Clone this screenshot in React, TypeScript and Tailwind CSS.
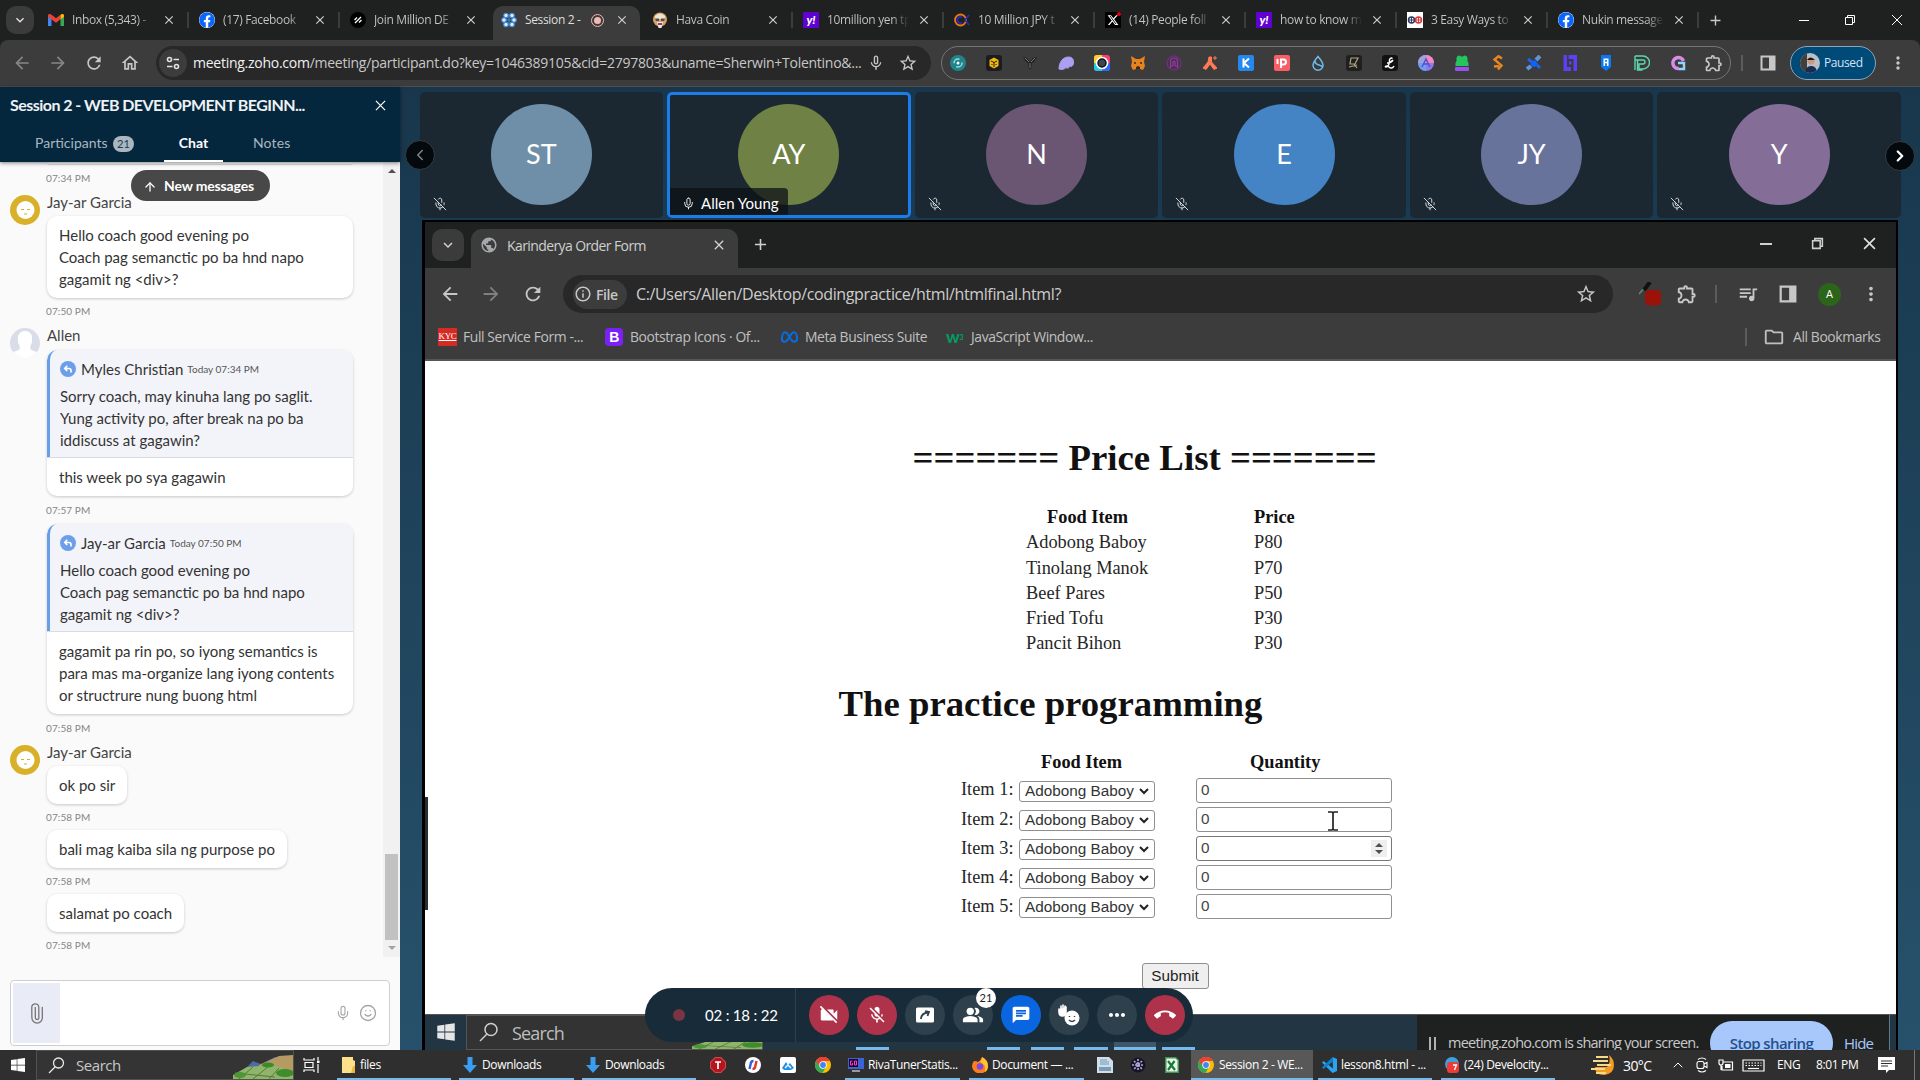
import type { ReactNode } from "react";
import {
  MdArrowBack, MdArrowForward, MdRefresh, MdOutlineHome, MdStarBorder, MdOutlineExtension, MdMicNone,
  MdMoreVert, MdOutlineQueueMusic, MdOutlineFolder, MdInfoOutline, MdClose, MdAdd, MdExpandMore,
  MdVideocamOff, MdMicOff, MdPeopleAlt, MdChat, MdMoreHoriz, MdCallEnd, MdPublic,
} from "react-icons/md";
import { FaFacebook, FaWindows } from "react-icons/fa";
import { FaXTwitter } from "react-icons/fa6";
import { Paperclip, Mic, MicOff, Smile, ArrowUp, ChevronLeft, ChevronRight, ChevronUp } from "lucide-react";

/* ---------- shared glyphs ---------- */

function Chrome({ className }: { className: string }) {
  return (
    <svg viewBox="0 0 24 24" className={className}>
      <circle cx="12" cy="12" r="12" fill="#fbbc05" />
      <path d="M12 12 1.6 6A12 12 0 0 1 22.4 6H12Z" fill="#ea4335" />
      <path d="M12 12 1.6 6a12 12 0 0 0 9.6 18l5.5-9.5Z" fill="#34a853" />
      <path d="M1.6 6A12 12 0 0 1 22.4 6H12l-5 7.500Z" fill="#ea4335" />
      <circle cx="12" cy="12" r="5.6" fill="#fff" />
      <circle cx="12" cy="12" r="4.400" fill="#4285f4" />
    </svg>
  );
}

function Restore({ className }: { className: string }) {
  return (
    <svg viewBox="0 0 12 12" className={className} fill="none" stroke="currentColor">
      <path d="M1.500 3.500h7v7h-7zM3.500 3.500v-2h7v7h-2" />
    </svg>
  );
}

function SidePanel({ className }: { className: string }) {
  return (
    <svg viewBox="0 0 16 16" className={className} fill="none" stroke="currentColor" strokeWidth="2">
      <path d="M1.500 1.500h13v13h-13z" />
      <path d="M9 1h6v14H9z" fill="currentColor" stroke="none" />
    </svg>
  );
}

function Yahoo() {
  return (
    <span className="flex h-4 w-4 items-center justify-center bg-[#5f01d1] font-['Lato'] text-[12px] leading-none font-black text-white italic">
      y!
    </span>
  );
}

/* ---------- outer browser ---------- */

const tabs: { title: string; icon: ReactNode; active?: boolean; sep?: boolean }[] = [
  {
    title: "Inbox (5,343) -", sep: true,
    icon: (
      <svg viewBox="0 0 16 12" className="h-3 w-4">
        <path d="M0 1.500V12h3.500V5Z" fill="#4285f4" />
        <path d="M16 1.500V12h-3.500V5Z" fill="#34a853" />
        <path d="M0 1.500C0 0 2 -.5 3.500.7L8 4.200 12.500.7v4.600L8 8.800 0 2.800Z" fill="#ea4335" />
        <path d="M12.500.7C14-.5 16 0 16 1.500v1.300l-3.500 2.600Z" fill="#fbbc04" />
      </svg>
    ),
  },
  { title: "(17) Facebook", sep: true, icon: <FaFacebook className="h-4 w-4 rounded-full bg-white text-[#0866ff]" /> },
  {
    title: "Join Million DE",
    icon: (
      <svg viewBox="0 0 16 16" className="h-4 w-4">
        <circle cx="8" cy="8" r="8" fill="#000" />
        <path d="m5 11 6-6M4.500 8 7 5.500M9 10.500 11.500 8" stroke="#fff" strokeWidth="1.300" />
      </svg>
    ),
  },
  {
    title: "Session 2 -", active: true,
    icon: (
      <svg viewBox="0 0 16 16" className="h-4 w-4" fill="#d8ecff" stroke="#3f86d0" strokeWidth="1.100">
        <circle cx="5" cy="3.500" r="2.300" /><circle cx="11" cy="3.500" r="2.300" />
        <circle cx="3" cy="8" r="2.300" /><circle cx="13" cy="8" r="2.300" />
        <circle cx="5" cy="12.500" r="2.300" /><circle cx="11" cy="12.500" r="2.300" />
        <path d="M8 2v12M5 8h6" />
      </svg>
    ),
  },
  {
    title: "Hava Coin", sep: true,
    icon: (
      <svg viewBox="0 0 16 16" className="h-4 w-4">
        <circle cx="8" cy="7.500" r="7" fill="#d9a066" />
        <path d="M3 4q5-5 10 0v3H3Z" fill="#f2e3cf" />
        <path d="M3 6.500h4V9H4zM9 6.500h4L12 9H9z" fill="#43506b" />
        <path d="M5 10h6l-1.500 6h-3Z" fill="#e9e4e6" />
        <path d="M6 11h4v2H6z" fill="#a33b4b" />
      </svg>
    ),
  },
  { title: "10million yen tp", sep: true, icon: <Yahoo /> },
  {
    title: "10 Million JPY t", sep: true,
    icon: (
      <svg viewBox="0 0 16 16" className="h-4 w-4" fill="none" strokeWidth="1.800">
        <circle cx="6.500" cy="8" r="5.500" stroke="#e8771f" />
        <path d="M8 5.500a3 3 0 1 0 0 5M11 8l4-5M11 8l4 5" stroke="#2a2bb5" />
      </svg>
    ),
  },
  {
    title: "(14) People foll", sep: true,
    icon: (
      <span className="relative flex h-4 w-4 items-center justify-center bg-black text-white">
        <FaXTwitter className="h-3 w-3" />
        <i className="absolute top-0 right-0 h-1 w-1 rounded-full bg-red-600" />
      </span>
    ),
  },
  { title: "how to know m", sep: true, icon: <Yahoo /> },
  {
    title: "3 Easy Ways to", sep: true,
    icon: (
      <svg viewBox="0 0 16 16" className="h-4 w-4">
        <path d="M0 0h16v16H0z" fill="#fff" />
        <circle cx="4.500" cy="8" r="3" fill="none" stroke="#2a3c63" strokeWidth="1.500" />
        <circle cx="11.500" cy="8" r="3" fill="none" stroke="#d8393b" strokeWidth="1.500" />
        <path d="M2 8h5M4.500 5v6" stroke="#2a3c63" />
        <path d="M9 8h5M11.500 5v6" stroke="#d8393b" />
      </svg>
    ),
  },
  { title: "Nukin message", sep: true, icon: <FaFacebook className="h-4 w-4 rounded-full bg-white text-[#0866ff]" /> },
];

function TabStrip() {
  return (
    <div className="flex h-10 items-stretch bg-[#1f2120] pl-1.5">
      <button className="mt-1.5 flex h-7 w-7 items-center justify-center rounded-[10px] bg-[#3b3b3b] text-[#e3e3e3]">
        <MdExpandMore className="h-4 w-4" />
      </button>
      <div className="ml-1 flex">
        {tabs.map((t) => (
          <div
            key={t.title}
            className={
              t.active
                ? "relative flex w-[151px] items-center pl-[10px] before:absolute before:inset-x-[2px] before:top-1.5 before:bottom-0 before:rounded-t-[10px] before:bg-[#3c3c3c]"
                : "relative flex w-[151px] items-center pl-[10px]"
            }
          >
            <span className="relative flex w-4 items-center">{t.icon}</span>
            <span
              className={
                t.active
                  ? "relative ml-2 w-[66px] overflow-hidden text-[12px] tracking-[-0.35px] whitespace-nowrap text-[#dfdfdf]"
                  : "relative ml-2 w-[82px] overflow-hidden bg-linear-to-r from-[#c7c7c7] from-80% to-[#1f2120] bg-clip-text text-[12px] tracking-[-0.35px] whitespace-nowrap text-transparent"
              }
            >
              {t.title}
            </span>
            {t.active && (
              <span className="relative mr-[3px] flex h-[13px] w-[13px] items-center justify-center rounded-full border border-[#f2b8b5]">
                <i className="h-[7px] w-[7px] rounded-full bg-[#f2b8b5]" />
              </span>
            )}
            <MdClose className="relative ml-2 h-3.5 w-3.5 text-[#d0d0d0]" />
            {t.sep && <i className="absolute top-3 right-0 h-4 w-0.5 bg-[#3c3c3c]" />}
          </div>
        ))}
      </div>
      <div className="flex w-8 items-center justify-center text-[#c7c7c7]"><MdAdd className="h-[17px] w-[17px]" /></div>
      <div className="ml-auto flex w-[138px] items-center justify-around text-white">
        <i className="h-px w-2.5 bg-white" />
        <Restore className="h-3 w-3" />
        <svg viewBox="0 0 12 12" className="h-3 w-3" stroke="currentColor"><path d="m1 1 10 10M11 1 1 11" /></svg>
      </div>
    </div>
  );
}

const extensions: ReactNode[] = [
  <><circle cx="8" cy="8" r="8" fill="#23838b" /><circle cx="8" cy="8" r="4" fill="none" stroke="#8de0e0" strokeWidth="1.500" strokeDasharray="8 4" /><circle cx="8" cy="8" r="1.500" fill="#fff" /></>,
  <><rect width="16" height="16" rx="3" fill="#1c1c20" /><path d="M8 2.500 12.500 5v6L8 13.500 3.500 11V5Z" fill="#f0b90b" /><path d="m5 6 3 1.500L11 6M8 7.500V12M6 9v1M10 9v1" stroke="#1c1c20" fill="none" /></>,
  <><path d="m1 2 4 1 3 4 3-4 4-1-3 5-2 1-1 6H7L6 8 4 7Z" fill="#222" /><path d="m3 3 4 4M13 3 9 7M8 8v5" stroke="#777" /></>,
  <path d="M1 14C1 7 5 2 10.500 2 14.500 2 16 5 15.500 8c-.4 3-2 4-3.500 3-1 2-3 3-4 1.500C6.500 14.500 3 15 1 14ZM10 5v2M13 5v2" fill="#ab9ff2" stroke="#ab9ff2" />,
  <><rect width="16" height="16" rx="3" fill="#ff3e70" /><path d="M0 8V3a3 3 0 0 1 3-3h5v8Z" fill="#ffce2b" /><path d="M8 16h5a3 3 0 0 0 3-3V8H8Z" fill="#2a6cff" /><path d="M0 8v5a3 3 0 0 0 3 3h5V8Z" fill="#21c8e8" /><circle cx="8" cy="8" r="6.300" fill="#fff" /><circle cx="8" cy="8" r="4" fill="#3c4752" stroke="#111" strokeWidth="1.500" /></>,
  <><path d="m1 1 5 3h4l5-3-1 6 1 4-2 4-3-1H6l-3 1-2-4 1-4Z" fill="#e8821e" /><path d="m6 12 2-1 2 1v2H6Z" fill="#3b2a1e" /><path d="M4 8h2M10 8h2" stroke="#3b2a1e" strokeWidth="1.500" /></>,
  <><circle cx="8" cy="8" r="7" fill="none" stroke="#7a2a8c" strokeWidth="1.200" /><path d="M4.500 13V6.500a3.500 3.500 0 0 1 7 0V13M7 11V7a1 1 0 0 1 2 0v4M4.500 11H7M9 11h2.500" fill="none" stroke="#a32db5" strokeWidth="1.200" /></>,
  <path d="M7 2h2.500v5L15 13l-3 1.500L8 9l-4 5.500L1 13l5-6ZM13 1v4M11 3h4" fill="#ff7b54" stroke="#ff7b54" />,
  <><rect width="16" height="16" rx="2" fill="#2488ee" /><path d="M5.500 3.500v9M11 3.500 6 8l5 4.500" fill="none" stroke="#fff" strokeWidth="2" /></>,
  <><rect width="16" height="16" rx="2" fill="#f95f64" /><path d="M7 13V4.500h2.500a2 2 0 0 1 0 5H7M3.500 4v5" fill="none" stroke="#fff" strokeWidth="2" /></>,
  <path d="M8 1.500C5 5 3 7.500 3 10.200a5 5 0 0 0 10 0C13 7.500 11 5 8 1.500ZM5 6q0 3 4 4t3 3" fill="none" stroke="#6fbcf0" strokeWidth="1.500" />,
  <><rect width="16" height="16" rx="3" fill="#1f1f1f" /><path d="M5 3h7L9 9H4ZM3 12l8-2M8 9l3 4" fill="none" stroke="#b5a67c" strokeWidth="1.200" /></>,
  <><rect width="16" height="16" rx="3" fill="#111" /><path d="M10.500 3.500C9 2 7 4 7.500 6S6 12 4 12s1-2 3 0 4 1 5-1M5 8q4 0 6-3" fill="none" stroke="#fff" strokeWidth="1.500" /></>,
  <><circle cx="8" cy="8" r="8" fill="#8c7bf0" /><path d="M0 8a8 8 0 0 1 16 0Z" fill="#f28ac0" /><path d="M2 3a8 8 0 0 1 6-3v16a8 8 0 0 1-8-8Z" fill="#5ab8f5" opacity=".6" /><path d="m4 12 4-8 4 8M6 9h4" fill="none" stroke="#5b50c8" strokeWidth="1.500" /></>,
  <><path d="M1.500 11V8l1-2V3A2.500 2.500 0 0 1 7 1.500h2A2.500 2.500 0 0 1 13.500 3v3l1 2v3Z" fill="#25c45c" /><rect x="1" y="12" width="14" height="4" rx="1" fill="#9b4ff0" /></>,
  <path d="M12 3.500 8.500 1.200 4.500 4.500 11.500 10.500 8 14.500M4 11.500l5-.5" fill="none" stroke="#e8871e" strokeWidth="2.400" />,
  <><path d="m5 7 4-2 3 4-3 3-4-1Z" fill="#0d63ff" /><path d="m10 5 4-4M1 14l4-3" stroke="#5e95d8" strokeWidth="4" /><path d="m2 4 4 3M11 10l3 3" stroke="#1e63e8" strokeWidth="3" /></>,
  <path d="M1.500 0h3.500v12h4v4H1.500ZM6.500 0H15v16h-3.500V4h-5ZM7 6.500h2.500v3H7z" fill="#5b41f5" />,
  <><path d="M3 0h10v12l-5 4-5-4Z" fill="#0a78f0" /><path d="M6.300 11V4.200h3.400V11M6 7.500h4" fill="none" stroke="#fff" strokeWidth="1.600" /></>,
  <path d="M1 1h8a6.500 6.500 0 0 1 0 13H5V9h4a2 2 0 0 0 0-4H1M1 1v14M3.500 5v10h5" fill="none" stroke="#5cd8ac" strokeWidth="1.400" />,
  <><path d="M13.500 6A5.500 5.500 0 1 0 9 13.500" fill="none" stroke="#d88be8" strokeWidth="3.500" /><path d="M8 8h6v6H9" fill="none" stroke="#8fd3ff" strokeWidth="2.500" /></>,
];

function Toolbar() {
  return (
    <div className="flex h-[47px] items-center rounded-t-lg border-b border-[#4d4d4d] bg-[#3c3c3c] pl-3 text-[#c7c7c7]">
      <MdArrowBack className="h-5 w-5 text-[#868686]" />
      <MdArrowForward className="ml-4 h-5 w-5 text-[#868686]" />
      <MdRefresh className="ml-4 h-5 w-5" />
      <MdOutlineHome className="ml-4 h-5 w-5" />
      <div className="ml-4 flex h-[34px] w-[775px] items-center rounded-full bg-[#282828] pl-[3px]">
        <span className="flex h-7 w-7 items-center justify-center rounded-full bg-[#3c3c3c]">
          <svg viewBox="0 0 14 14" className="h-3.5 w-3.5" fill="none" stroke="#e3e3e3" strokeWidth="1.600">
            <circle cx="3.500" cy="3.500" r="2" /><path d="M7.500 3.500H13M1 10.500h5.500" /><circle cx="10.500" cy="10.500" r="2" />
          </svg>
        </span>
        <span className="ml-1.5 w-[670px] pb-px text-[14px] tracking-[-0.26px] whitespace-nowrap text-[#c7c7c7]">
          <span className="text-[#f1f1f1]">meeting.zoho.com</span>
          /meeting/participant.do?key=1046389105&amp;cid=2797803&amp;uname=Sherwin+Tolentino&amp;...
        </span>
        <MdMicNone className="ml-1 h-[18px] w-[18px]" />
        <MdStarBorder className="ml-[13px] h-5 w-5" />
      </div>
      <div className="ml-2.5 flex h-[34px] w-[790px] items-center gap-5 rounded-full border border-[#757575] pl-2">
        {extensions.map((e, i) => (
          <svg key={i} viewBox="0 0 16 16" className="h-4 w-4 shrink-0" fill="none">{e}</svg>
        ))}
        <MdOutlineExtension className="-ml-0.5 h-5 w-5 shrink-0" />
      </div>
      <i className="ml-2.5 h-4 w-0.5 bg-[#5c5c5c]" />
      <SidePanel className="ml-[17px] h-4 w-4" />
      <div className="ml-3.5 flex h-[34px] w-[86px] items-center rounded-full border border-[#8ea5b8] bg-[#004a77] pl-[9px]">
        <svg viewBox="0 0 20 20" className="h-5 w-5 rounded-full">
          <path d="M0 0h20v20H0z" fill="#b8bfc6" />
          <path d="M0 0h7v20H0z" fill="#433f3c" />
          <path d="M5 20q1-8 7-7 5 1 5 7Z" fill="#1b2b52" />
          <circle cx="11" cy="8" r="3.500" fill="#c79b7e" />
          <path d="M7 7q3-5 8 0Z" fill="#16171b" />
        </svg>
        <span className="ml-1 text-[12px] tracking-[-0.4px] text-[#d3e3fd]">Paused</span>
      </div>
      <MdMoreVert className="ml-3 h-5 w-5" />
    </div>
  );
}

/* ---------- chat sidebar ---------- */

function SunAvatar() {
  return (
    <svg viewBox="0 0 30 30" className="h-[30px] w-[30px] shrink-0">
      <circle cx="15" cy="15" r="15" fill="#d9b02a" />
      <circle cx="15.500" cy="15" r="9" fill="#fff" />
      <path d="M11 14.500h3M17 14.500h3M14 19h3" stroke="#d9b02a" />
    </svg>
  );
}

function PersonAvatar() {
  return (
    <svg viewBox="0 0 30 30" className="h-[30px] w-[30px] shrink-0">
      <circle cx="15" cy="15" r="15" fill="#d9dde8" />
      <path d="M3 24q3-1 6.500-2.500 1-3-1.500-7V8q2-5 7-5t7 5v6.500q-2.500 4-1.500 7Q24 23 27 24A15 15 0 0 1 3 24Z" fill="#fff" />
    </svg>
  );
}

function Time({ t }: { t: string }) {
  return <div className="pl-[46px] text-[10px] leading-[12px] tracking-[0.1px] text-[#858585]">{t}</div>;
}

function Sender({ name, avatar }: { name: string; avatar: ReactNode }) {
  return (
    <div className="flex h-[18px] pl-2.5">
      <span className="mt-0.5 h-[30px]">{avatar}</span>
      <span className="ml-[7px] text-[15px] leading-[18px] text-[#444]">{name}</span>
    </div>
  );
}

function Quote({ name, time, lines }: { name: string; time: string; lines: string[] }) {
  return (
    <div className="border-b border-[#d9dbe0] bg-[#f3f4f9]">
      <div className="rounded-tl-[10px] border-l-[3px] border-[#659fe8] pt-[9px] pb-1.5 pl-2.5">
        <div className="flex h-5 items-center">
          <svg viewBox="0 0 16 16" className="h-4 w-4">
            <circle cx="8" cy="8" r="8" fill="#6d9eea" />
            <path d="M11 11.500V9.500Q11 7.500 9 7.500H5M7.200 4.800 4.800 7.500l2.400 2.500" fill="none" stroke="#fff" strokeWidth="1.700" />
          </svg>
          <span className="ml-[5px] text-[15px] text-[#333]">{name}</span>
          <span className="ml-1 text-[10px] text-[#555]">{time}</span>
        </div>
        <div className="mt-1.5 text-[15px] leading-[22px] whitespace-nowrap text-[#333]">
          {lines.map((l) => <div key={l}>{l}</div>)}
        </div>
      </div>
    </div>
  );
}

function Lines({ lines }: { lines: string[] }) {
  return (
    <div className="px-3 py-2 text-[15px] leading-[22px] whitespace-nowrap text-[#333]">
      {lines.map((l) => <div key={l}>{l}</div>)}
    </div>
  );
}

const bubble = "ml-[47px] overflow-hidden rounded-[10px] bg-white shadow-[0_1px_3px_rgba(0,0,0,0.2)]";

function Sidebar() {
  return (
    <aside className="flex h-[963px] w-[400px] shrink-0 flex-col bg-[#fafafa] font-['Lato',sans-serif]">
      <header className="relative z-10 h-[75px] bg-[#05273d] shadow-[0_1px_4px_rgba(0,0,0,0.5)]">
        <div className="flex h-[37px] items-center pl-2.5 text-[16px] font-bold text-[#eef2f5]">
          <span className="w-[363px] pb-px whitespace-nowrap tracking-[-0.54px]">Session 2 - WEB DEVELOPMENT BEGINN...</span>
          <svg viewBox="0 0 12 12" className="ml-0.5 h-[11px] w-[11px]" stroke="#fff" strokeWidth="1.300"><path d="m1 1 10 10M11 1 1 11" /></svg>
        </div>
        <div className="flex h-[38px] text-[14px] text-[#a9b6c0]">
          <span className="ml-[35px] w-[72px] pt-2.5 leading-[18px]">Participants</span>
          <span className="mt-3 ml-1.5 flex h-4 w-[21px] items-center justify-center rounded-full bg-[#a9b7c0] text-[11px] text-[#1c3a4e]">21</span>
          <span className="ml-[30px] flex h-full w-[59px] justify-center border-b-2 border-white pt-2.5 leading-[18px] font-bold text-white">Chat</span>
          <span className="ml-[30px] pt-2.5 leading-[18px] tracking-[0.15px]">Notes</span>
        </div>
      </header>
      <div className="flex h-[795px]">
        <div className="relative flex-1 overflow-hidden">
          <div className="ml-[47px] h-[3px] w-[306px] rounded-b-[10px] border-b border-[#ddd] bg-white" />
          <div className="mt-[7px]"><Time t="07:34 PM" /></div>
          <div className="mt-[9px]"><Sender name="Jay-ar Garcia" avatar={<SunAvatar />} /></div>
          <div className="mt-[5px] w-[353px]"><div className={bubble}><Lines lines={["Hello coach good evening po", "Coach pag semanctic po ba hnd napo", "gagamit ng <div>?"]} /></div></div>
          <div className="mt-[7px]"><Time t="07:50 PM" /></div>
          <div className="mt-[9px]"><Sender name="Allen" avatar={<PersonAvatar />} /></div>
          <div className="mt-1.5 w-[353px]">
            <div className={bubble}>
              <Quote name="Myles Christian" time="Today 07:34 PM" lines={["Sorry coach, may kinuha lang po saglit.", "Yung activity po, after break na po ba", "iddiscuss at gagawin?"]} />
              <Lines lines={["this week po sya gagawin"]} />
            </div>
          </div>
          <div className="mt-2"><Time t="07:57 PM" /></div>
          <div className="mt-2 w-[353px]">
            <div className={bubble}>
              <Quote name="Jay-ar Garcia" time="Today 07:50 PM" lines={["Hello coach good evening po", "Coach pag semanctic po ba hnd napo", "gagamit ng <div>?"]} />
              <Lines lines={["gagamit pa rin po, so iyong semantics is", "para mas ma-organize lang iyong contents", "or structrure nung buong html"]} />
            </div>
          </div>
          <div className="mt-2"><Time t="07:58 PM" /></div>
          <div className="mt-[9px]"><Sender name="Jay-ar Garcia" avatar={<SunAvatar />} /></div>
          {["ok po sir", "bali mag kaiba sila ng purpose po", "salamat po coach"].map((m, i) => (
            <div key={m} className={i === 0 ? "mt-[5px]" : "mt-[7px]"}>
              <div className="flex"><div className={bubble}><Lines lines={[m]} /></div></div>
              <div className="mt-[7px]"><Time t="07:58 PM" /></div>
            </div>
          ))}
          <div className="absolute top-2 left-[131px] flex h-[31px] w-[139px] items-center rounded-full bg-[#484848] pl-3 text-white">
            <ArrowUp className="mt-0.5 h-3.5 w-3.5" strokeWidth={2.2} />
            <span className="ml-1 w-[96px] text-center text-[14px] font-bold tracking-[-0.15px] whitespace-nowrap">New messages</span>
          </div>
        </div>
        <div className="flex w-[17px] flex-col items-center bg-[#f1f1f1]">
          <i className="mt-[7px] border-x-4 border-b-4 border-x-transparent border-b-[#505050]" />
          <i className="mt-[681px] h-[86px] w-[13px] bg-[#c1c1c1]" />
          <i className="mt-[6px] border-x-4 border-t-4 border-x-transparent border-t-[#a3a3a3]" />
        </div>
      </div>
      <div className="mt-[23px] ml-2.5 flex h-[66px] w-[380px] items-center rounded border border-[#cfcfcf] bg-white pl-0.5 text-[#a5a5a5]">
        <span className="flex h-[60px] w-[47px] items-center justify-center bg-[#e9ecf6]"><Paperclip className="h-[21px] w-[21px] -rotate-45 text-[#777]" strokeWidth={1.5} /></span>
        <Mic className="ml-[275px] h-4 w-4" strokeWidth={1.7} />
        <Smile className="ml-2 h-[18px] w-[18px]" strokeWidth={1.7} />
      </div>
    </aside>
  );
}

/* ---------- participants strip ---------- */

const people = [
  { i: "ST", c: "bg-[#6f8fa9]" },
  { i: "AY", c: "bg-[#708145]", speaking: true },
  { i: "N", c: "bg-[#6a5573]" },
  { i: "E", c: "bg-[#4483c4]" },
  { i: "JY", c: "bg-[#68739c]" },
  { i: "Y", c: "bg-[#846d96]" },
];

function Participants() {
  return (
    <div className="relative flex h-[126px] gap-1 pr-[19px] pl-[19.500px]">
      {people.map((p) => (
        <div
          key={p.i}
          className={
            p.speaking
              ? "relative flex flex-1 items-center justify-center overflow-hidden rounded-[5px] bg-[#1b2831] pb-px ring-3 ring-[#1c7de6] ring-inset"
              : "relative flex flex-1 items-center justify-center rounded-[5px] bg-[#1b2831] pb-px"
          }
        >
          <span className={`${p.c} flex h-[101px] w-[101px] items-center justify-center rounded-full font-['Lato'] text-[27px] text-white`}>{p.i}</span>
          {p.speaking ? (
            <span className="absolute bottom-[3px] left-[3px] flex h-[27px] w-[118px] items-center rounded-tr bg-[#0c1016]/75 pt-1 pl-3 text-white">
              <Mic className="h-[13px] w-[13px]" strokeWidth={1.7} />
              <span className="ml-1.5 font-['Lato'] text-[15px] whitespace-nowrap">Allen Young</span>
            </span>
          ) : (
            <MicOff className="absolute bottom-[7px] left-[13px] h-3.5 w-3.5 text-[#d5d9dc]" strokeWidth={1.7} />
          )}
        </div>
      ))}
      <span className="absolute top-12 left-[5px] flex h-[30px] w-[30px] items-center justify-center rounded-full border border-[#333d43] bg-[#04090e] text-[#858585]">
        <ChevronLeft className="h-[18px] w-[18px]" />
      </span>
      <span className="absolute top-[49px] right-[5px] flex h-[30px] w-[30px] items-center justify-center rounded-full border border-[#333d43] bg-[#04090e] text-white">
        <ChevronRight className="h-[18px] w-[18px]" strokeWidth={3} />
      </span>
    </div>
  );
}

/* ---------- shared screen ---------- */

const prices = [
  ["Adobong Baboy", "P80"], ["Tinolang Manok", "P70"], ["Beef Pares", "P50"], ["Fried Tofu", "P30"], ["Pancit Bihon", "P30"],
];

function SharedBrowser() {
  return (
    <>
      <div className="flex h-[46px] items-start bg-[#1f2120] pt-[7px] pl-[7px] text-[#d0d0d0]">
        <span className="flex h-8 w-8 items-center justify-center rounded-[10px] bg-[#3b3b3b]"><MdExpandMore className="h-[18px] w-[18px]" /></span>
        <div className="ml-[7px] flex h-[39px] w-[267px] items-center rounded-t-[11px] bg-[#3c3c3c] pb-[7px] pl-[9px]">
          <MdPublic className="h-[18px] w-[18px] text-[#a5a8ac]" />
          <span className="ml-[9px] w-[204px] text-[14px] tracking-[-0.6px] whitespace-nowrap text-[#cfcfcf]">Karinderya Order Form</span>
          <MdClose className="h-4 w-4" />
        </div>
        <MdAdd className="mt-1.5 ml-[13px] h-[19px] w-[19px]" />
        <div className="ml-auto flex w-[156px] items-center justify-around pt-2 pr-0">
          <i className="h-0.5 w-3 bg-[#d0d0d0]" />
          <Restore className="h-[13px] w-[13px] stroke-[1.400]" />
          <svg viewBox="0 0 12 12" className="h-[13px] w-[13px]" stroke="#e0e0e0" strokeWidth="1.500"><path d="m1 1 10 10M11 1 1 11" /></svg>
        </div>
      </div>
      <div className="flex h-[52px] items-center bg-[#3c3c3c] pl-3.5 text-[#c7c7c7]">
        <MdArrowBack className="h-[22px] w-[22px]" />
        <MdArrowForward className="ml-[19px] h-[22px] w-[22px] text-[#808080]" />
        <MdRefresh className="ml-5 h-[22px] w-[22px]" />
        <div className="ml-[19px] flex h-[38px] w-[1050px] items-center rounded-full bg-[#282828] pl-2.5">
          <span className="flex h-[29px] w-[54px] items-center rounded-full bg-[#3c3c3c] pl-px text-[14px] font-semibold tracking-[-0.4px]">
            <MdInfoOutline className="h-[18px] w-[18px] shrink-0" /><span className="ml-1">File</span>
          </span>
          <span className="ml-[9px] w-[939px] text-[16px] tracking-[-0.36px] text-[#cdcdcd]">C:/Users/Allen/Desktop/codingpractice/html/htmlfinal.html?</span>
          <MdStarBorder className="h-[22px] w-[22px]" />
        </div>
        <svg viewBox="0 0 24 24" className="ml-[26px] h-6 w-6">
          <path d="m0 12 7-8" stroke="#5d8f6c" strokeWidth="1.500" /><path d="m5 8 6-8" stroke="#111" strokeWidth="4" />
          <rect x="6" y="8" width="16" height="15.500" rx="4" fill="#9b1208" />
        </svg>
        <MdOutlineExtension className="ml-[13px] h-[22px] w-[22px]" />
        <i className="ml-[17px] h-[18px] w-0.5 bg-[#5c5c5c]" />
        <MdOutlineQueueMusic className="ml-5 h-[22px] w-[22px]" />
        <SidePanel className="ml-5 h-[18px] w-[18px]" />
        <span className="ml-[21px] flex h-[23px] w-[23px] items-center justify-center rounded-full bg-[#2c6419] text-[11px] text-white">A</span>
        <MdMoreVert className="ml-[19px] h-[22px] w-[22px]" />
      </div>
      <div className="flex h-[41px] items-center border-b-2 border-[#555] bg-[#3c3c3c] pb-[5px] pl-[13px] text-[13.900px] tracking-[-0.4px] whitespace-nowrap text-[#c0c0c0]">
        <span className="flex h-[18px] w-[19px] items-center justify-center bg-[#d52b24] font-['Liberation_Serif'] text-[9px] text-white underline">KYC</span>
        <span className="ml-1.5 w-[142px]">Full Service Form -...</span>
        <span className="flex h-[18px] w-[18px] items-center justify-center rounded-sm bg-[#7a22f5] font-['Liberation_Sans'] text-[14px] font-bold text-white">B</span>
        <span className="ml-[7px] w-[150px]">Bootstrap Icons · Of...</span>
        <svg viewBox="0 0 20 14" className="h-3.5 w-[19px]" fill="none" stroke="#0a6be0" strokeWidth="2.200">
          <path d="M2 9C2 5 3.500 2 5.500 2 9 2 11 12 14.700 12 17 12 18 10.500 18 8.500 18 5 16.500 2 14.500 2 11 2 9 12 5 12 3 12 2 11 2 9Z" />
        </svg>
        <span className="ml-1.5 w-[141px]">Meta Business Suite</span>
        <span className="w-[19px] font-['Lato'] text-[17px] font-black text-[#059862]">w<sup className="text-[7px]">3</sup></span>
        <span className="ml-1.5">JavaScript Window...</span>
        <i className="ml-auto h-[18px] w-0.5 bg-[#5c5c5c]" />
        <MdOutlineFolder className="ml-4 h-[22px] w-[22px]" />
        <span className="ml-2 w-[87px]">All Bookmarks</span>
        <i className="w-4" />
      </div>
    </>
  );
}

function OrderForm() {
  return (
    <div className="relative h-[653px] bg-white font-['Liberation_Serif',serif] text-[18.350px] text-[#262626]">
      <i className="absolute top-[436px] left-0 h-[113px] w-[3px] bg-[#2a2d30]" />
      <h1 className="pt-[76px] pl-[487.500px] text-[36.800px] leading-[42px] font-bold whitespace-nowrap text-[#111]">======= Price List =======</h1>
      <div className="mt-[26px] ml-[601px] grid w-[400px] grid-cols-[228px_1fr] leading-[25.300px]">
        <b className="pl-[21px] text-[#111]">Food Item</b>
        <b className="text-[#111]">Price</b>
        {prices.map(([n, p]) => [<span key={n}>{n}</span>, <span key={n + p}>{p}</span>])}
      </div>
      <h1 className="mt-[26.400px] pl-[413.500px] text-[36.750px] leading-[42px] font-bold whitespace-nowrap text-[#111]">The practice programming</h1>
      <div className="mt-[25.500px] flex h-[25px] items-center text-[#111]">
        <b className="ml-[616px] w-[209px]">Food Item</b>
        <b>Quantity</b>
      </div>
      <div className="mt-0.5 flex flex-col gap-[4.100px]">
        {[1, 2, 3, 4, 5].map((n) => (
          <div key={n} className="relative flex h-[25px] items-center">
            <span className="ml-[536px] w-[58px] whitespace-nowrap">Item {n}:</span>
            <span className="mt-0.5 flex h-[21px] w-[136px] items-center justify-between rounded-[3px] border border-[#8f8f8f] pr-[5px] pl-[5px] font-['Liberation_Sans',sans-serif] text-[15.300px] whitespace-nowrap text-[#333]">
              Adobong Baboy
              <svg viewBox="0 0 10 7" className="h-[7px] w-2.5" fill="none" stroke="#222" strokeWidth="2"><path d="m1 1 4 4 4-4" /></svg>
            </span>
            <span className={n === 3
              ? "ml-[41px] flex h-[25px] w-[196px] items-center justify-between rounded-[3px] border-[1.500px] border-[#777] pr-1 pl-1 font-['Liberation_Sans',sans-serif] text-[15.300px] text-[#444]"
              : "ml-[41px] flex h-[25px] w-[196px] items-center justify-between rounded-[3px] border border-[#8f8f8f] pr-1 pl-1 font-['Liberation_Sans',sans-serif] text-[15.300px] text-[#444]"}>
              0
              {n === 3 && (
                <span className="flex h-[17px] w-4 flex-col items-center justify-center gap-[3px] bg-[#efefef]">
                  <i className="border-x-4 border-b-4 border-x-transparent border-b-[#505050]" />
                  <i className="border-x-4 border-t-4 border-x-transparent border-t-[#505050]" />
                </span>
              )}
            </span>
            {n === 2 && (
              <svg viewBox="0 0 12 20" className="absolute top-[4px] left-[902px] h-5 w-3" fill="none" stroke="#222" strokeWidth="1.700">
                <path d="M1 1h4l1 1 1-1h4M1 19h4l1-1 1 1h4M6 2v16" />
              </svg>
            )}
          </div>
        ))}
      </div>
      <button className="mt-[44px] ml-[716.500px] flex h-[26px] w-[67px] items-center justify-center rounded-[3px] border border-[#8f8f8f] bg-[#efefef] font-['Liberation_Sans',sans-serif] text-[15.300px] text-[#222]">
        Submit
      </button>
    </div>
  );
}

function Landscape({ className }: { className: string }) {
  return (
    <svg viewBox="0 0 60 24" className={className} preserveAspectRatio="none">
      <path d="M9 17 20 6l8 3L42 2l18 6v16H0Z" fill="#4a6aa8" />
      <path d="M26 10 46 1l14-1v24H20Z" fill="#b59a62" />
      <path d="M0 20 14 12l26-2 20 6v8H0Z" fill="#8fb56a" />
      <path d="m6 24 14-12M20 24l16-13M36 24l10-11M2 18l40 4" stroke="#5a7a3a" fill="none" />
      <ellipse cx="35" cy="10" rx="6" ry="2.500" fill="#3d8a2a" />
      <ellipse cx="52" cy="18" rx="9" ry="4" fill="#3f8c2c" />
      <ellipse cx="7" cy="20" rx="6" ry="3" fill="#4c9636" />
    </svg>
  );
}

function SharedTaskbar() {
  return (
    <div className="flex h-9 overflow-hidden border-t border-[#555] bg-[#213642] text-[#bdbdbd]">
      <span className="flex w-[41px] shrink-0 justify-center pt-[7px]"><FaWindows className="h-5 w-5 text-[#e6e6e6]" /></span>
      <div className="relative flex w-[297px] shrink-0 border border-[#555] bg-[#333]">
        <svg viewBox="0 0 20 20" className="mt-1.5 ml-3 h-5 w-5" fill="none" stroke="#cfcfcf" strokeWidth="1.500"><circle cx="12" cy="7.500" r="6" /><path d="m8 12-7 7" /></svg>
        <span className="ml-[13px] pt-[5px] text-[18px] leading-[24px] tracking-[-0.85px]">Search</span>
        <Landscape className="absolute right-0 bottom-0 h-4 w-[70px]" />
      </div>
      <div className="flex shrink-0 items-end">
        <i className="ml-[93px] h-[3px] w-[33px] bg-[#76b9ed]" />
        <i className="ml-[98px] h-[3px] w-[33px] bg-[#76b9ed]" />
        <i className="ml-[11px] h-[3px] w-[33px] bg-[#76b9ed]" />
        <i className="ml-2.5 h-[3px] w-[34px] bg-[#76b9ed]" />
        <i className="ml-1.5 h-full w-[42px] border-b-3 border-[#76b9ed] bg-[#405765]" />
        <i className="ml-1.5 h-[3px] w-[33px] bg-[#76b9ed]" />
      </div>
      <div className="ml-auto flex w-[472px] shrink-0 bg-[#1f2120] text-[15px] tracking-[-0.6px] whitespace-nowrap">
        <i className="mt-[22px] ml-3 h-5 w-[7px] shrink-0 border-x-2 border-[#b0b0b0]" />
        <span className="ml-3 w-[251px] shrink-0 pt-4 text-[14.500px] leading-[24px] tracking-[-0.75px] text-[#c9c9c9]">meeting.zoho.com is sharing your screen.</span>
        <span className="mt-1.5 ml-[11px] flex h-11 w-[123px] shrink-0 justify-center rounded-full bg-[#a8c7fa] pt-2.5 leading-[24px] font-semibold text-[#22508c]">Stop sharing</span>
        <span className="ml-[11px] pt-4 leading-[24px] tracking-[-0.8px] text-[#a8c7fa]">Hide</span>
      </div>
      <i className="w-[7px] shrink-0 border-l border-[#5f7c8c] bg-[#213642]" />
    </div>
  );
}

const round = "flex h-10 w-10 items-center justify-center rounded-full text-white";

function CallControls() {
  return (
    <div className="absolute top-[901px] left-[245px] flex h-[54px] w-[548px] items-center rounded-full bg-[#182b38]">
      <i className="ml-[28px] h-3 w-3 rounded-full bg-[#7a3443]" />
      <span className="ml-5 w-[74px] font-['Lato'] text-[15px] tracking-[-0.2px] whitespace-nowrap text-white">02 : 18 : 22</span>
      <i className="ml-4 h-full w-px bg-[#2e414d]" />
      <div className="ml-[13px] flex gap-2">
        <span className={`${round} bg-[#ae3249]`}><MdVideocamOff className="h-[22px] w-[22px]" /></span>
        <span className={`${round} bg-[#ae3249]`}><MdMicOff className="h-5 w-5" /></span>
        <span className={`${round} bg-[#2e404c]`}>
          <svg viewBox="0 0 18 18" className="h-[18px] w-[18px]"><rect y="1.500" width="18" height="15" rx="1.500" fill="#fff" /><path d="M5 13q0-5.500 7-6.500M9 5l4 1-1.500 4" fill="none" stroke="#2e404c" strokeWidth="1.800" /></svg>
        </span>
        <span className={`${round} relative bg-[#2e404c]`}>
          <MdPeopleAlt className="h-[22px] w-[22px]" />
          <span className="absolute -top-[7px] left-[23px] flex h-5 w-5 items-center justify-center rounded-full bg-white font-['Lato'] text-[11px] text-[#222]">21</span>
        </span>
        <span className={`${round} bg-[#0a66e0]`}><MdChat className="h-5 w-5" /></span>
        <span className={`${round} bg-[#2e404c]`}>
          <svg viewBox="0 0 22 22" className="h-[22px] w-[22px]">
            <circle cx="14" cy="14" r="7.500" fill="#fff" />
            <path d="M1 5v3q0 4 3.500 4T8 8V3M3 2v6M5 1v7M7 2v6" fill="#fff" stroke="#fff" strokeWidth="1.600" strokeLinecap="round" />
            <path d="M11.500 12v1M16.500 12v1M11 16q3 3 6 0" fill="none" stroke="#2e404c" strokeWidth="1.400" />
          </svg>
        </span>
        <span className={`${round} bg-[#2e404c]`}><MdMoreHoriz className="h-[24px] w-[24px]" /></span>
        <span className={`${round} bg-[#ae3249]`}><MdCallEnd className="h-[22px] w-[22px]" /></span>
      </div>
    </div>
  );
}

function Meeting() {
  return (
    <main className="relative flex-1 bg-linear-to-b from-[#18374d] to-[#27516b] pt-[5px]">
      <Participants />
      <div className="mt-0.5 ml-[22px] h-[830px] w-[1476px] overflow-hidden border-2 border-b-0 border-l-3 border-black">
        <SharedBrowser />
        <OrderForm />
        <SharedTaskbar />
      </div>
      <CallControls />
    </main>
  );
}

/* ---------- desktop taskbar ---------- */

function DownArrow() {
  return <svg viewBox="0 0 14 16" className="h-4 w-3.5"><path d="M4.500 0h5v8H14l-7 8-7-8h4.500Z" fill="#3a9df0" /></svg>;
}

const task = "flex h-full items-center border-b-2 border-[#76b9ed] pt-0.5 whitespace-nowrap";

function Taskbar() {
  return (
    <footer className="flex h-[30px] items-center bg-[#2f2f2f] text-[12px] tracking-[-0.35px] text-white">
      <FaWindows className="ml-2.5 h-4 w-4" />
      <div className="relative ml-2.5 flex h-full w-[258px] items-center border border-[#515151] bg-[#343434] pl-[11px]">
        <svg viewBox="0 0 17 17" className="h-[17px] w-[17px]" fill="none" stroke="#e8e8e8" strokeWidth="1.300"><circle cx="10.500" cy="6" r="5" /><path d="m7 10-6 6" /></svg>
        <span className="ml-[11px] text-[15px] tracking-[-0.45px] text-[#c8c8c8]">Search</span>
        <Landscape className="absolute right-0 bottom-0 h-6 w-[60px]" />
      </div>
      <svg viewBox="0 0 17 16" className="ml-[9px] h-4 w-[17px]" fill="none" stroke="#fff" strokeWidth="1.200"><path d="M1 1v2h10V1M1 15v-2h10v2M2 5.500h8v5H2zM15 0v3M15 7v9" /><path d="M14 3.500h2.500v2.500H14z" fill="#fff" stroke="none" /></svg>
      <div className={`${task} ml-[17px] w-[114px] pl-[5px]`}>
        <svg viewBox="0 0 13 16" className="h-4 w-[13px]"><path d="M0 0h11v3l2 1v12H0Z" fill="#ffe08a" /><path d="M11 9h2v7h-4Z" fill="#e8b93c" /></svg>
        <span className="ml-[5px]">files</span>
      </div>
      <div className={`${task} ml-2 w-[115px] pl-1`}><DownArrow /><span className="ml-[5px]">Downloads</span></div>
      <div className={`${task} ml-2 w-[114px] pl-1`}><DownArrow /><span className="ml-[5px]">Downloads</span></div>
      <svg viewBox="0 0 16 16" className="ml-3.5 h-4 w-4"><path d="M5 0h6l5 5v6l-5 5H5l-5-5V5Z" fill="#d9474d" /><path d="M5.400 1h5.200L15 5.400v5.200L10.600 15H5.400L1 10.600V5.400Z" fill="#b3161f" /><path d="M5 5h6M8 5v7" stroke="#fff" strokeWidth="1.700" /></svg>
      <svg viewBox="0 0 16 16" className="ml-[19px] h-4 w-4"><circle cx="8" cy="8" r="8" fill="#fff" /><path d="M4.500 12 6 5.500Q6.500 4 8.500 4" fill="none" stroke="#2b63d8" strokeWidth="2.400" /><path d="M11.500 4 10 10.500Q9.500 12 7.500 12" fill="none" stroke="#e3342f" strokeWidth="2.400" /></svg>
      <svg viewBox="0 0 16 16" className="ml-[19px] h-4 w-4"><rect width="16" height="16" rx="2" fill="#fff" /><path d="M2 11 6 5l2 3 2-2 4 5-3 2H4Z" fill="#2291e8" /><path d="m5 11 3-3 3 3" stroke="#fff" strokeWidth="1.300" fill="none" /></svg>
      <Chrome className="ml-[19px] h-4 w-4" />
      <div className={`${task} ml-3.5 w-[115px] pl-[3px]`}>
        <svg viewBox="0 0 16 16" className="h-4 w-4"><path d="M0 1h16v11H0z" fill="#3b62d8" /><path d="M4 13h8v2H4z" fill="#9a9a9a" /><path d="M1 2h9v8H1z" fill="#1a0620" /><path d="M4.500 4H2.500v4h2V6M6.500 4h2v4h-2z" stroke="#ff39d0" fill="none" /></svg>
        <span className="ml-1">RivaTunerStatis...</span>
      </div>
      <div className={`${task} ml-[9px] w-[115px] pl-[3px]`}>
        <svg viewBox="0 0 16 16" className="h-4 w-4"><path d="M2 4q3 0 4 1 3-2 4-5 6 3 6 9a8 7.500 0 0 1-16 0Q0 6 2 4Z" fill="#ff7b1f" /><path d="M10 0q6 3 6 9 0 4-3 6 1-8-5-10 2-2 2-5Z" fill="#ffc42e" /><circle cx="8" cy="9.500" r="3.300" fill="#7b4be0" /></svg>
        <span className="ml-1">Document — ...</span>
      </div>
      <svg viewBox="0 0 16 16" className="ml-[13px] h-4 w-4"><path d="M0 0h12l4 4v12H0Z" fill="#cfe0ec" /><path d="M3 3h7M3 5h9M3 7h9" stroke="#6d9ab8" /><path d="M2 10h12v4H2z" fill="#7d9bb2" /></svg>
      <svg viewBox="0 0 16 16" className="ml-[17px] h-4 w-4"><circle cx="8" cy="8" r="7.500" fill="#171525" /><path d="M8 2v12M2 8h12M4 4l8 8M12 4l-8 8" stroke="#a9a4d8" strokeWidth="1.700" strokeDasharray="2 1" /></svg>
      <svg viewBox="0 0 16 16" className="ml-[18px] h-4 w-4"><path d="M1 0h11l3 3v13H1z" fill="#3e9350" /><path d="M2.500 1.500h9l2 2v11h-11z" fill="#e9f4ea" /><path d="m4 4 7 9M10.500 4 4 13" stroke="#1b7a36" strokeWidth="2.200" /></svg>
      <div className="ml-[11px] flex h-full w-[122px] items-center border-b-2 border-[#76b9ed] bg-[#585858] pt-0.5 pl-[7px] whitespace-nowrap">
        <Chrome className="h-4 w-4" />
        <span className="ml-[5px]">Session 2 - WE...</span>
      </div>
      <div className={`${task} ml-[5px] w-[114px] pl-[3px]`}>
        <svg viewBox="0 0 16 16" className="h-4 w-4"><path d="M11.500 0 16 2v12l-4.500 2L1 5.500 2.500 4 12 11.500Z" fill="#2aa3f0" /><path d="M11.500 0 12 4.500 2.500 12 1 10.500Z" fill="#0e7fd0" /></svg>
        <span className="ml-1">lesson8.html - ...</span>
      </div>
      <div className={`${task} ml-[9px] w-[114px] pl-[3px]`}>
        <svg viewBox="0 0 16 16" className="h-4 w-4"><circle cx="8" cy="7" r="7" fill="#3aa2e0" /><rect x="3" y="5" width="12" height="11" rx="3" fill="#ef3b36" /><path d="M9 8h3.500L10.500 13" stroke="#fff" strokeWidth="1.300" fill="none" /></svg>
        <span className="ml-1">(24) Develocity...</span>
      </div>
      <svg viewBox="0 0 24 20" className="ml-9 h-5 w-6"><path d="M18 0q2 8-2 12H4q0 8 9 8 10-1 10-10 0-6-5-10Z" fill="#f59a23" /><path d="M5 2h12M2 6h15M6 10h14M0 14h14M5 18h10" stroke="#f7d98c" strokeWidth="1.800" /></svg>
      <span className="ml-2 w-[30px] text-[14px] tracking-[-0.6px] whitespace-nowrap">30°C</span>
      <ChevronUp className="ml-[17px] h-4 w-4" strokeWidth={1.5} />
      <svg viewBox="0 0 12 16" className="ml-[10px] h-4 w-3" fill="none" stroke="#fff" strokeWidth="1.100"><rect x="1" y="4.500" width="7" height="7" rx="2" /><path d="m8 7 3-1.500v5L8 9M2 2.500q4-3 8 0M2 13.500q4 3 8 0" /></svg>
      <svg viewBox="0 0 16 14" className="ml-2.5 h-3.5 w-4" fill="none" stroke="#fff" strokeWidth="1.200"><path d="M5 4h9.500v8H4V8M14.500 6.500V9M1 2v3q0 2 2 2t2-2V2ZM3 7v5" /><path d="M7 6h5.500v4H7z" fill="#fff" stroke="none" /></svg>
      <svg viewBox="0 0 23 13" className="ml-2 h-[13px] w-[23px]" fill="none" stroke="#fff" strokeWidth="1.200"><path d="M1 1h21v11H1z" /><path d="M3.500 4h16M3.500 6.500h16" strokeDasharray="1.500 1.500" /><path d="M6 9.500h11" /></svg>
      <span className="ml-3 w-[23px]">ENG</span>
      <span className="ml-4 w-[42px] whitespace-nowrap">8:01 PM</span>
      <svg viewBox="0 0 17 16" className="ml-[20px] h-4 w-[17px]"><path d="M0 0h17v13H11l-3 3v-3H0Z" fill="#fff" /><path d="M3 4h11M3 6.500h11M3 9h7" stroke="#2f2f2f" /></svg>
      <i className="ml-[19px] h-full w-px bg-[#777]" />
    </footer>
  );
}

export default function App() {
  return (
    <div className="h-[1080px] w-[1920px] overflow-hidden bg-[#1f2120] font-['Open_Sans','Noto_Sans',sans-serif]">
      <TabStrip />
      <Toolbar />
      <div className="flex h-[963px]">
        <Sidebar />
        <Meeting />
      </div>
      <Taskbar />
    </div>
  );
}
